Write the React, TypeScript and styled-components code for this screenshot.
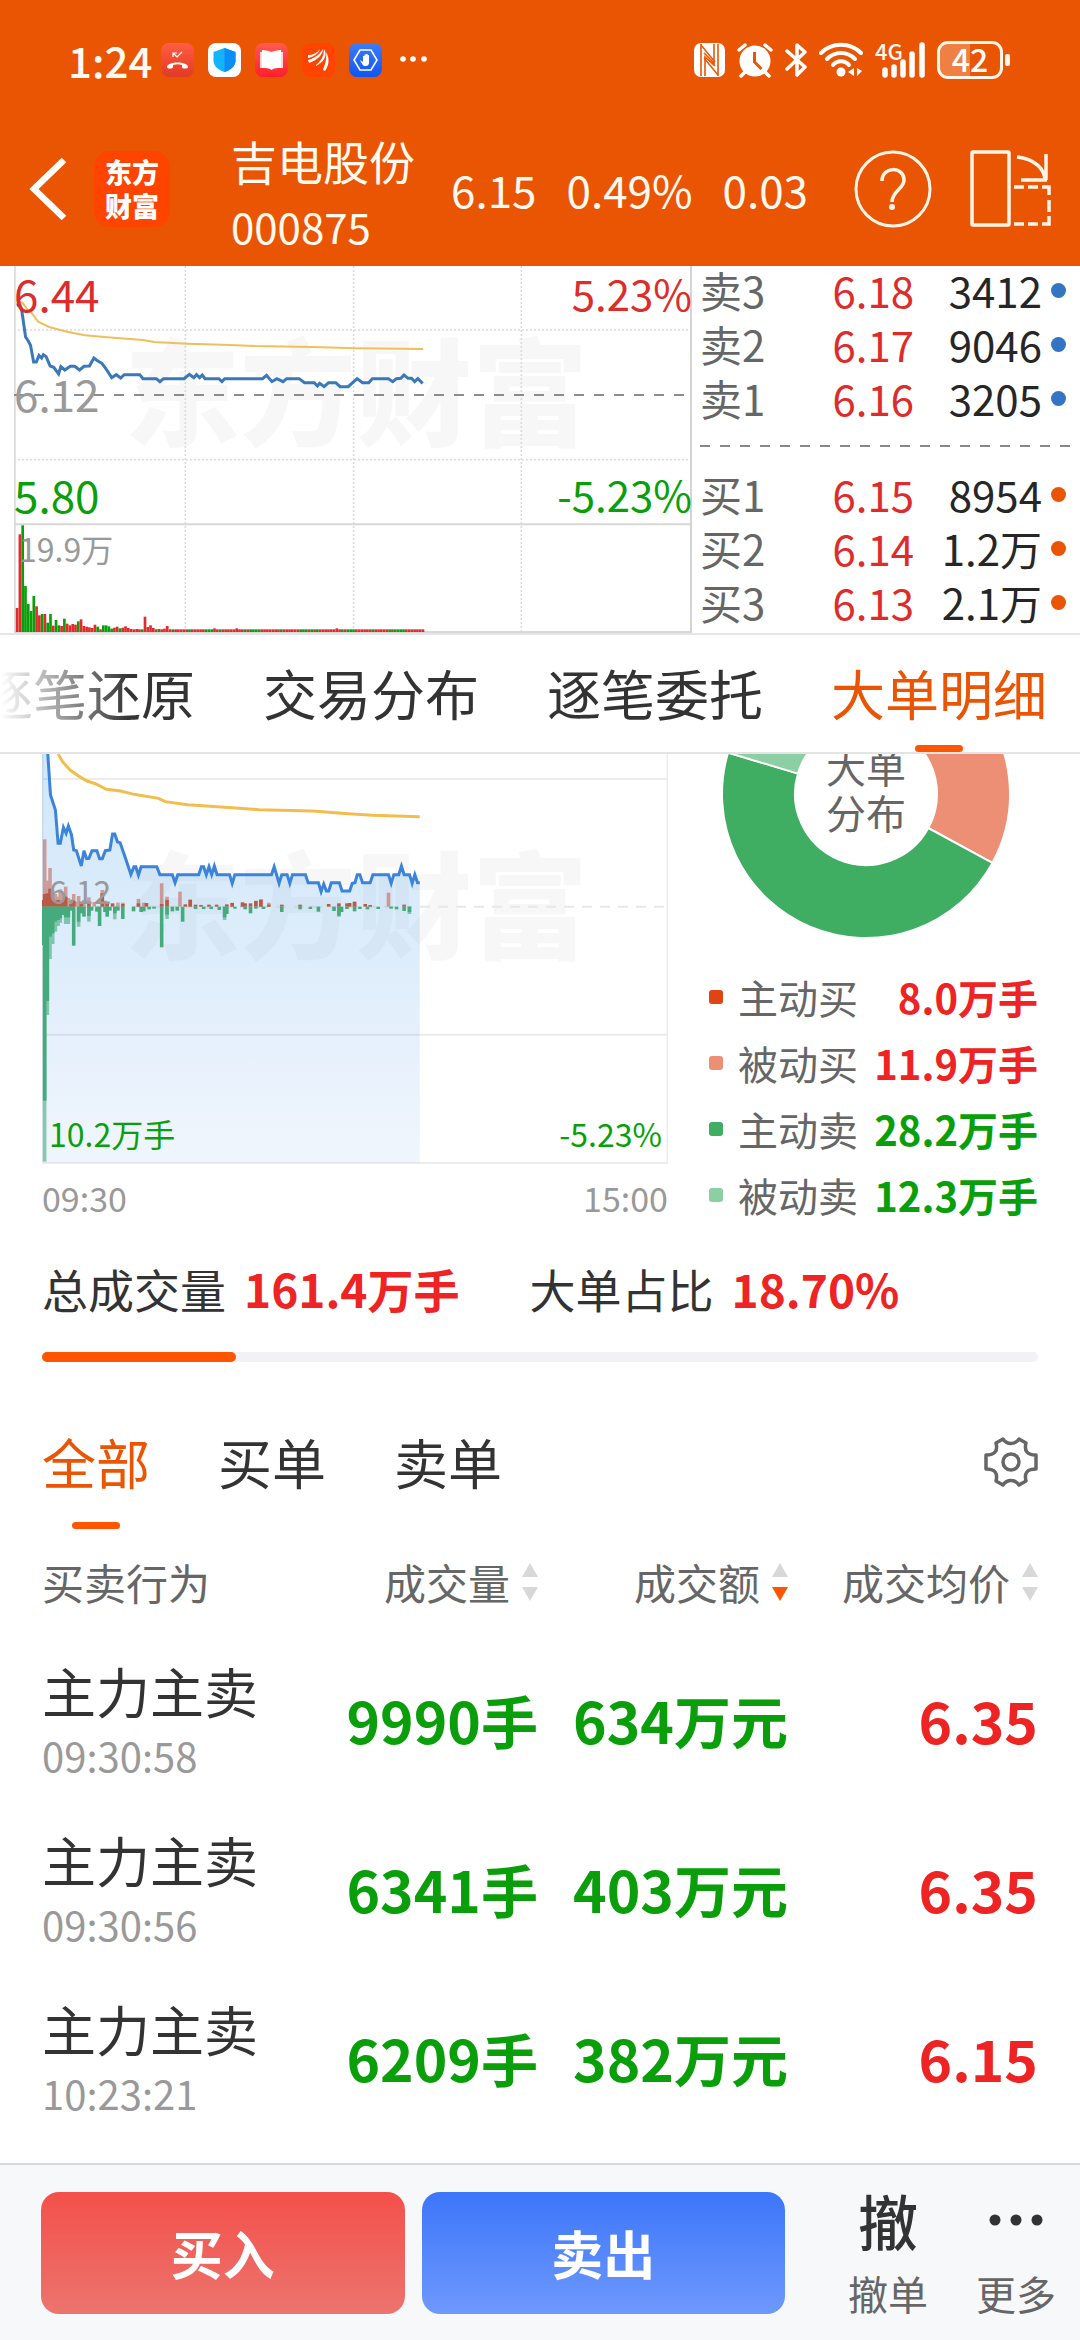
import React, { useState } from "react";
import styled, { createGlobalStyle } from "styled-components";

const color = {
  brand: "#ea5504",
  accent: "#ff5500",
  red: "#ee2424",
  priceRed: "#dd2c2c",
  green: "#0a9f0a",
  ink: "#333333",
  sub: "#666666",
  mute: "#999999",
  line: "#dddddd",
};

const GlobalStyle = createGlobalStyle`
  * { box-sizing: border-box; }
  body {
    margin: 0;
    background: #ffffff;
    color: ${color.ink};
    font-family: "Noto Sans CJK SC", "Noto Sans", sans-serif;
  }
  button {
    margin: 0;
    padding: 0;
    border: 0;
    background: none;
    color: inherit;
    font: inherit;
    cursor: pointer;
  }
`;

const Page = styled.div`
  display: flex;
  flex-direction: column;
  min-height: 100vh;
  overflow: hidden;
`;

/* ---------- header ---------- */

const Header = styled.header`
  background: ${color.brand};
  color: #fffaf0;
`;

const StatusBar = styled.div`
  display: flex;
  justify-content: space-between;
  align-items: center;
  height: 120px;
  padding: 0 70px 0 68px;
`;

const StatusGroup = styled.div<{ $gap: number }>`
  display: flex;
  align-items: center;
  gap: ${(p) => p.$gap}px;
`;

const Clock = styled.time`
  font-size: 42px;
  font-weight: 500;
  line-height: 60px;
`;

const Battery = styled.div`
  display: flex;
  align-items: center;
  gap: 2px;
`;

const BatteryBody = styled.div`
  width: 66px;
  height: 38px;
  border: 3px solid #fff5e8;
  border-radius: 11px;
  background: linear-gradient(90deg, #ee8044 50%, transparent 50%);
  color: #ffffff;
  font-size: 32px;
  font-weight: 500;
  line-height: 28px;
  text-align: center;
`;

const BatteryNub = styled.div`
  width: 5px;
  height: 12px;
  border-radius: 2px;
  background: #fff5e8;
`;

const NavBar = styled.div`
  display: flex;
  align-items: center;
  height: 146px;
  padding: 0 28px 8px 28px;
`;

const IconButton = styled.button`
  display: flex;
  flex: none;
`;

const Logo = styled.a`
  display: flex;
  flex: none;
  align-items: center;
  justify-content: center;
  width: 76px;
  height: 76px;
  margin-left: 26px;
  border-radius: 16px;
  background: #ff4400;
  color: #ffffff;
  font-size: 27px;
  font-weight: 900;
  line-height: 34px;
  text-align: center;
  text-decoration: none;
`;

const StockId = styled.div`
  flex: none;
  width: 220px;
  margin-left: 61px;
  padding-top: 8px;
`;

const StockName = styled.h1`
  margin: 0;
  font-size: 46px;
  font-weight: 400;
  line-height: 66px;
`;

const StockCode = styled.div`
  font-size: 42px;
  line-height: 66px;
`;

const Quote = styled.div`
  display: flex;
  flex: 1;
  gap: 30px;
  font-size: 44px;
  line-height: 60px;
`;

const NavActions = styled.div`
  display: flex;
  flex: none;
  align-items: center;
  gap: 38px;
`;

/* ---------- quote panel ---------- */

const QuotePanel = styled.section`
  display: grid;
  grid-template-columns: 692fr 388fr;
  height: 369px;
  border-bottom: 2px solid #e6e6e6;
`;

const MiniChart = styled.div`
  position: relative;
  margin-left: 14px;
  border-right: 2px solid #d4d4d4;
  height: 367px;
`;

const ChartSvg = styled.svg`
  display: block;
  position: relative;
  width: 100%;
  height: 100%;
`;

const ChartLabel = styled.span<{
  $top: number;
  $left?: number;
  $right?: number;
  $size: number;
  $color: string;
}>`
  position: absolute;
  top: ${(p) => p.$top}px;
  ${(p) => (p.$left !== undefined ? `left: ${p.$left}px;` : "")}
  ${(p) => (p.$right !== undefined ? `right: ${p.$right}px;` : "")}
  color: ${(p) => p.$color};
  font-size: ${(p) => p.$size}px;
  line-height: 48px;
  white-space: nowrap;
`;

const Watermark = styled.span<{ $top: number; $left: number }>`
  position: absolute;
  top: ${(p) => p.$top}px;
  left: ${(p) => p.$left}px;
  color: rgba(0, 0, 0, 0.03);
  font-size: 116px;
  font-weight: 900;
  line-height: 120px;
  white-space: nowrap;
`;

const OrderBook = styled.div`
  padding: 0 14px 0 8px;
`;

const OrderRow = styled.div`
  display: grid;
  grid-template-columns: 1fr 84px 128px 24px;
  align-items: start;
  height: 54px;
  font-size: 42px;
  line-height: 48px;
  text-align: right;
`;

const OrderLabel = styled.span`
  color: ${color.sub};
  text-align: left;
`;

const OrderPrice = styled.span`
  color: ${color.priceRed};
`;

const OrderVolume = styled.span`
  color: #262626;
`;

const Dot = styled.i<{ $color: string }>`
  justify-self: end;
  width: 15px;
  height: 15px;
  margin-top: 17px;
  border-radius: 50%;
  background: ${(p) => p.$color};
`;

const OrderDivider = styled.div`
  height: 2px;
  margin: 17px -10px 23px 0;
  background: repeating-linear-gradient(90deg, #888 0 10px, transparent 10px 20px);
`;

/* ---------- tabs ---------- */

const TabStrip = styled.nav`
  position: relative;
  display: flex;
  justify-content: flex-end;
  gap: 68px;
  height: 119px;
  padding-right: 33px;
  border-bottom: 2px solid #e4e4e4;
  overflow: hidden;
`;

const TabFade = styled.div`
  position: absolute;
  inset: 0 auto 0 0;
  width: 130px;
  background: linear-gradient(90deg, #ffffff, rgba(255, 255, 255, 0));
  pointer-events: none;
`;

const Tab = styled.button<{ $active: boolean }>`
  display: flex;
  flex: none;
  flex-direction: column;
  align-items: center;
  justify-content: space-between;
  height: 117px;
  padding-top: 8px;
  color: ${(p) => (p.$active ? color.brand : color.ink)};
  font-size: 54px;
  line-height: 100px;
  white-space: nowrap;

  &::after {
    content: "";
    width: 48px;
    height: 7px;
    border-radius: 4px;
    background: ${(p) => (p.$active ? color.accent : "transparent")};
  }
`;

const FilterTab = styled(Tab)`
  padding-top: 0;
`;

/* ---------- big-order section ---------- */

const Content = styled.main`
  flex: 1;
  padding: 0 42px;
`;

const Distribution = styled.section`
  display: grid;
  grid-template-columns: 626fr 370fr;
`;

const FlowChart = styled.div`
  position: relative;
  height: 410px;
`;

const TimeAxis = styled.div`
  display: flex;
  justify-content: space-between;
  padding-top: 10px;
  color: ${color.mute};
  font-size: 34px;
  line-height: 48px;
`;

const DonutBox = styled.div`
  position: relative;
  height: 184px;
  margin-left: 54px;
  width: 288px;
  overflow: hidden;
`;

const DonutTitle = styled.div`
  position: absolute;
  inset: -11px 0 auto 0;
  color: ${color.sub};
  font-size: 40px;
  line-height: 46px;
  text-align: center;
`;

const Legend = styled.ul`
  margin: 26px 0 0 41px;
  padding: 0;
  list-style: none;
`;

const LegendItem = styled.li`
  display: flex;
  align-items: center;
  height: 66px;
  font-size: 40px;
  line-height: 62px;
`;

const Swatch = styled.i<{ $color: string }>`
  width: 14px;
  height: 14px;
  margin-right: 15px;
  border-radius: 3px;
  background: ${(p) => p.$color};
`;

const LegendName = styled.span`
  flex: 1;
  color: ${color.sub};
`;

const LegendValue = styled.strong<{ $color: string }>`
  color: ${(p) => p.$color};
  font-weight: 700;
`;

const Stats = styled.div`
  display: flex;
  gap: 70px;
  margin-top: 28px;
  font-size: 46px;
  line-height: 64px;
`;

const Stat = styled.div`
  display: flex;
  gap: 18px;
`;

const StatValue = styled.strong`
  color: ${color.red};
  font-weight: 700;
`;

const Track = styled.div`
  height: 10px;
  margin-top: 32px;
  border-radius: 5px;
  background: #f2f2f5;
`;

const Fill = styled.div<{ $percent: number }>`
  width: ${(p) => p.$percent}%;
  height: 100%;
  border-radius: 5px;
  background: ${color.accent};
`;

const FilterBar = styled.div`
  display: flex;
  align-items: center;
  gap: 68px;
  height: 117px;
  margin-top: 50px;
`;

const FilterTools = styled.div`
  flex: 1;
  display: flex;
  justify-content: flex-end;
  align-items: center;
  padding-bottom: 17px;
`;

const Trades = styled.table`
  width: 100%;
  table-layout: fixed;
  border-collapse: collapse;
  text-align: right;

  th,
  td {
    padding: 0;
  }
  th:first-child,
  td:first-child {
    width: 246px;
    text-align: left;
  }
  th:last-child,
  td:last-child,
  th:nth-child(2),
  td:nth-child(2),
  th:nth-child(3),
  td:nth-child(3) {
    width: 250px;
  }
`;

const HeadCell = styled.th`
  height: 105px;
  color: ${color.sub};
  font-size: 42px;
  font-weight: 400;
  line-height: 60px;
`;

const SortButton = styled.button`
  display: inline-flex;
  align-items: center;
  gap: 12px;
  white-space: nowrap;
`;

const TradeRow = styled.tr`
  height: 169px;
`;

const TradeName = styled.div`
  font-size: 54px;
  line-height: 72px;
`;

const TradeTime = styled.time`
  display: block;
  color: ${color.mute};
  font-size: 40px;
  line-height: 56px;
`;

const TradeValue = styled.td<{ $color: string }>`
  color: ${(p) => p.$color};
  font-size: 57px;
  font-weight: 700;
  line-height: 72px;
  white-space: nowrap;
`;

/* ---------- bottom bar ---------- */

const BottomBar = styled.footer`
  display: flex;
  align-items: center;
  height: 177px;
  padding: 0 22px 0 41px;
  border-top: 2px solid #d5d9db;
  background: #f6f8fa;
`;

const TradeButton = styled.button<{ $from: string; $to: string }>`
  flex: 1;
  height: 122px;
  margin-right: 17px;
  border-radius: 18px;
  background: linear-gradient(180deg, ${(p) => p.$from}, ${(p) => p.$to});
  color: #ffffff;
  font-size: 52px;
  font-weight: 700;
  line-height: 72px;
`;

const MiniAction = styled.button`
  display: flex;
  flex: none;
  flex-direction: column;
  align-items: center;
  width: 84px;
  margin-left: 44px;
  color: ${color.sub};
  font-size: 40px;
  line-height: 56px;
`;

const MiniActions = styled.div`
  display: flex;
  flex: none;
  padding-bottom: 10px;
`;

const MiniIcon = styled.span`
  display: flex;
  align-items: center;
  height: 90px;
  color: ${color.ink};
  font-size: 60px;
  font-weight: 500;
  line-height: 90px;
`;

/* ---------- icons ---------- */

const AppBadges = () => (
  <svg width="268" height="34" viewBox="0 0 268 34" aria-hidden="true">
    <defs>
      <linearGradient id="callBg" x2="0" y2="1">
        <stop stopColor="#ff5d43" />
        <stop offset="1" stopColor="#e23a24" />
      </linearGradient>
      <linearGradient id="bookBg" x2="0" y2="1">
        <stop stopColor="#ff5a52" />
        <stop offset="1" stopColor="#ff1f2c" />
      </linearGradient>
      <linearGradient id="handBg" x2="0" y2="1">
        <stop stopColor="#3f7cf7" />
        <stop offset="1" stopColor="#0f55f2" />
      </linearGradient>
    </defs>
    <rect width="33" height="34" rx="8" fill="url(#callBg)" />
    <path d="M12 14v-4h4M12 10l4 4 5-5" fill="none" stroke="#fff" strokeWidth="1.200" />
    <path d="M6 24c0-6 21-6 21 0 0 2-6 2-6 0v-2c-3-1-6-1-9 0v2c0 2-6 2-6 0z" fill="#fff" />
    <rect x="47" width="33" height="34" rx="8" fill="#fff" />
    <path d="M63.500 5l11 4v9c0 5-5 9-11 11-6-2-11-6-11-11V9z" fill="#12b4fb" />
    <path d="M63.500 5l11 4v9c0 5-5 9-11 11z" fill="#0a8df5" />
    <rect x="94" width="33" height="34" rx="8" fill="url(#bookBg)" />
    <path d="M99 9h23v16H99z" fill="#fff" opacity=".8" />
    <path d="M101 7c4 0 7 1 9.500 2 2.500-1 5.500-2 9.500-2v18c-4 0-7 0-9.500 2-2.500-2-5.500-2-9.500-2z" fill="#fff" />
    <rect x="141" width="33" height="34" rx="8" fill="#ff4400" />
    <path d="M147 12c5 0 9-2 12-6-1 4-6 8-12 9zM147 17c7-2 12-6 15-11 0 6-6 11-14 14zM155 22c5-4 8-9 8-16 4 6 0 13-8 17zM162 27c2-6 4-10 3-18 4 7 3 13-1 19z" fill="#fff" />
    <rect x="188" width="33" height="34" rx="8" fill="url(#handBg)" />
    <path d="M193 17l6-10h11l6 10-6 10h-11z" fill="none" stroke="#fff" strokeWidth="1.600" />
    <path d="M199 17l3 2v-6h1.500v-1.500h1.500V11h1.500v1h1.500v7c0 3-1 4-4 4-2 0-3-2-5-6z" fill="#fff" />
    <circle cx="242" cy="16" r="2.800" fill="#fff" />
    <circle cx="252" cy="16" r="2.800" fill="#fff" />
    <circle cx="263" cy="16" r="2.800" fill="#fff" />
  </svg>
);

const NfcIcon = () => (
  <svg width="31" height="34" viewBox="0 0 31 34" aria-hidden="true">
    <rect width="31" height="34" rx="7" fill="#fff" />
    <path d="M7 1v32M24 1v32" stroke={color.brand} strokeWidth="1.600" />
    <path d="M11 33V14l10 9M20 1v19l-10-10" fill="none" stroke={color.brand} strokeWidth="1.600" />
    <path d="M7 2l14 17M10 15l14 17" stroke={color.brand} strokeWidth="1.400" />
  </svg>
);

const AlarmIcon = () => (
  <svg width="36" height="36" viewBox="0 0 36 36" aria-hidden="true">
    <circle cx="18" cy="19" r="15.500" fill="#fff" />
    <path d="M2 8l6-5M34 8l-6-5M4 34l5-5M32 34l-5-5" stroke="#fff" strokeWidth="3.500" strokeLinecap="round" />
    <path d="M17.500 10v10l7 7" fill="none" stroke={color.brand} strokeWidth="3" />
  </svg>
);

const BluetoothIcon = () => (
  <svg width="22" height="36" viewBox="0 0 22 36" aria-hidden="true">
    <path d="M2 9l18 16-8 8V3l8 7L2 27" fill="none" stroke="#fff" strokeWidth="3.500" strokeLinejoin="round" strokeLinecap="round" />
  </svg>
);

const WifiIcon = () => (
  <svg width="44" height="36" viewBox="0 0 44 36" aria-hidden="true">
    <g fill="none" stroke="#fff" strokeWidth="4" strokeLinecap="round">
      <path d="M2 11c11-11 29-11 40 0" />
      <path d="M8 17c8-8 20-8 28 0" />
      <path d="M14 23c4-5 12-5 16 0" />
    </g>
    <circle cx="22" cy="30" r="4.500" fill="#fff" />
    <path d="M35 26v8l-6-4zM38 26v8l5-5z" fill="#fff" />
  </svg>
);

const SignalWrap = styled.div`
  position: relative;
  display: flex;
`;

const SignalTag = styled.span`
  position: absolute;
  top: -3px;
  left: 0;
  font-size: 22px;
  font-weight: 500;
  line-height: 22px;
`;

const Signal = () => (
  <SignalWrap>
    <SignalTag>4G</SignalTag>
    <svg width="50" height="36" viewBox="0 0 50 36" aria-hidden="true">
      <path d="M10 28v5M19 25v8M28 20v13M37 12v21M47 3v30" stroke="#fff" strokeWidth="5.500" strokeLinecap="round" />
    </svg>
  </SignalWrap>
);

const BackIcon = () => (
  <svg width="40" height="66" viewBox="0 0 40 66" aria-hidden="true">
    <path d="M36 4L6 33l30 29" fill="none" stroke="#fff" strokeWidth="6.500" />
  </svg>
);

const HelpIcon = () => (
  <svg width="78" height="78" viewBox="0 0 78 78" fill="none" stroke="#fff5e6" aria-hidden="true">
    <circle cx="39" cy="39" r="37" strokeWidth="3" />
    <path d="M28 31c0-15 22-15 22-1 0 9-12 11-12 22" strokeWidth="3.500" />
    <circle cx="38" cy="57" r="3" fill="#fff5e6" stroke="none" />
  </svg>
);

const RotateIcon = () => (
  <svg width="82" height="78" viewBox="0 0 82 78" fill="none" stroke="#fff5e6" strokeWidth="3.500" aria-hidden="true">
    <rect x="2" y="2" width="37" height="73" rx="1" />
    <path d="M47 7c17 2 28 11 28 24M76 4v26M51 30h26" />
    <path d="M44 37h10M58 37h10M72 37h7v8M79 50v12M79 66v8h-7M68 74H58M54 74H44" />
  </svg>
);

const GearIcon = () => (
  <svg width="54" height="50" viewBox="0 0 54 50" fill="none" stroke="#666" strokeWidth="3.500" aria-hidden="true">
    <path
      d="M12 6L19 2C23 8 31 8 35 2L42 6C40 14 43 18 52 18V32C43 32 40 36 42 44L35 48C31 42 23 42 19 48L12 44C14 36 11 32 2 32V18C11 18 14 14 12 6Z"
      strokeLinejoin="round"
    />
    <circle cx="27" cy="25" r="8" />
  </svg>
);

const SortIcon = ({ active }: { active: boolean }) => (
  <svg width="16" height="38" viewBox="0 0 16 38" aria-hidden="true">
    <path d="M8 0l8 14H0z" fill="#d8d8d8" />
    <path d="M8 38l8-14H0z" fill={active ? color.accent : "#d8d8d8"} />
  </svg>
);

const DotsIcon = () => (
  <svg width="54" height="12" viewBox="0 0 54 12" fill="#333" aria-hidden="true">
    <circle cx="6" cy="6" r="5.500" />
    <circle cx="27" cy="6" r="5.500" />
    <circle cx="48" cy="6" r="5.500" />
  </svg>
);

/* ---------- chart data ---------- */

const priceLine =
  "37,138 44,136 48,150 57,233 63,245 68,258 75,308 81,308 87,288 93,296 97,286 103,292 112,320 120,324 131,344 136,322 145,332 157,321 167,321 178,332 188,321 200,320 210,296 218,304 228,312 236,326 250,355 260,346 270,356 278,346 313,346 320,358 350,358 358,367 366,358 412,358 424,345 434,355 440,346 447,355 453,347 459,358 490,358 497,367 503,358 588,358 597,348 609,367 620,358 634,367 642,358 670,358 682,370 704,370 711,380 716,372 726,382 736,370 752,370 762,382 780,382 800,358 812,370 826,370 834,358 870,358 880,367 888,358 898,357 905,347 914,357 922,357 929,367 936,358 947,372";
const averageLine =
  "37,124 50,130 62,152 70,160 85,187 110,203 150,217 190,228 240,234 320,242 345,248 420,253 500,256 570,260 700,263 800,267 948,269";

const flowPrice =
  "107,42 113,165 124,210 130,310 135,310 142,262 148,280 153,258 160,284 165,330 171,332 182,378 188,332 194,356 199,355 206,332 217,332 223,356 229,356 236,332 246,330 252,282 257,282 263,306 269,308 281,355 293,403 300,380 304,380 310,405 316,380 351,380 358,404 386,404 392,428 398,404 445,404 451,380 456,380 462,404 468,380 474,404 480,378 486,404 514,404 520,430 526,404 608,404 614,380 625,430 631,404 643,404 649,430 655,404 684,404 690,428 713,428 719,455 725,432 731,453 736,453 742,428 760,428 766,453 783,453 789,430 795,428 800,404 806,404 812,428 829,428 835,404 870,404 876,430 882,404 893,404 899,378 905,404 917,404 923,430 929,404 935,428 940,428";
const flowAverage =
  "130,42 140,65 157,90 178,110 195,123 215,132 238,148 270,153 300,163 355,175 370,185 420,194 520,203 580,209 700,213 780,221 835,226 940,230";

const openingVolumes: [number, "r" | "g"][] = [
  [72, "r"], [293, "r"], [320, "g"], [138, "g"], [84, "g"], [63, "g"], [108, "g"], [77, "r"], [50, "r"],
  [54, "g"], [54, "r"], [28, "g"], [54, "g"], [19, "r"], [36, "g"], [20, "g"], [18, "r"], [40, "g"],
  [25, "r"], [20, "r"], [24, "r"], [22, "r"], [32, "g"], [38, "r"], [18, "r"], [16, "r"], [14, "r"],
  [12, "r"], [22, "r"], [16, "g"], [8, "r"], [20, "g"], [20, "g"], [17, "g"], [10, "g"], [13, "r"],
  [16, "r"], [11, "g"], [13, "r"], [17, "r"], [12, "r"], [9, "r"], [8, "r"], [9, "r"], [8, "r"],
  [8, "g"], [46, "r"], [15, "r"], [20, "r"], [12, "r"], [8, "r"], [9, "g"], [8, "r"], [10, "r"], [18, "r"],
];
const volumes = Array.from({ length: 147 }, (_, i) => {
  const known = openingVolumes[i];
  if (known) return known;
  const tone = i % 11 === 7 || i % 13 === 4 || i % 17 < 3 ? "g" : "r";
  return [i === 71 || i === 79 || i === 115 ? 11 : 8, tone] as [number, "r" | "g"];
});

type Bar = [number, number];
const buyPale: Bar[] = [
  [100, 298], [106, 422], [112, 384], [118, 450], [124, 462], [130, 470], [135, 448], [141, 462], [147, 440],
  [153, 474], [159, 486], [165, 462], [171, 485], [176, 468], [188, 480], [199, 472], [211, 486], [229, 450],
  [235, 482], [264, 488], [275, 488], [310, 477], [322, 488], [362, 430], [374, 470], [403, 455], [426, 478],
  [520, 488], [573, 482], [585, 478], [602, 488], [794, 484], [870, 458],
];
const buyDeep: Bar[] = [
  [97, 480], [100, 462], [106, 460], [112, 446], [118, 482], [124, 484], [130, 480], [135, 484], [141, 486],
  [147, 470], [159, 492], [165, 482], [182, 492], [199, 490], [229, 460], [240, 492], [252, 490], [275, 492],
  [310, 490], [328, 489], [362, 492], [374, 480], [415, 493], [426, 480], [438, 494], [450, 495], [468, 494],
  [485, 494], [508, 493], [520, 489], [543, 487], [549, 490], [561, 490], [573, 483], [584, 479], [602, 494],
  [631, 494], [672, 494], [736, 492], [759, 490], [777, 490], [783, 489], [794, 486], [818, 492], [829, 495],
  [905, 494],
];
const sellPale: Bar[] = [
  [100, 1265], [106, 825], [112, 657], [118, 612], [124, 575], [130, 558], [135, 548], [147, 552], [153, 552],
  [176, 560], [199, 545], [257, 538], [374, 537], [503, 540], [759, 530], [917, 522],
];
const sellDeep: Bar[] = [
  [97, 615], [100, 1082], [106, 783], [112, 590], [118, 580], [124, 545], [130, 540], [135, 535], [141, 525],
  [147, 532], [153, 532], [159, 512], [165, 617], [176, 545], [182, 520], [188, 530], [199, 528], [205, 512],
  [217, 515], [223, 558], [235, 516], [240, 530], [246, 512], [257, 520], [264, 512], [275, 537], [299, 514],
  [316, 516], [322, 514], [334, 508], [345, 506], [362, 622], [374, 524], [386, 514], [397, 512], [409, 545],
  [438, 507], [456, 507], [473, 507], [491, 510], [503, 532], [508, 522], [526, 506], [549, 508], [561, 520],
  [573, 506], [590, 507], [631, 516], [672, 508], [695, 507], [713, 515], [748, 513], [759, 527], [765, 516],
  [777, 507], [794, 514], [806, 507], [823, 508], [847, 507], [876, 506], [888, 508], [905, 513], [917, 516],
];

const Bars = ({ bars, fill, opacity = 1 }: { bars: Bar[]; fill: string; opacity?: number }) => (
  <g fill={fill} opacity={opacity}>
    {bars.map(([x, y]) => (
      <rect key={x} x={x - 4} y={Math.min(y, 500)} width="8" height={Math.abs(y - 500)} />
    ))}
  </g>
);

const slices = [
  { name: "主动买", value: 8.0, fill: "#e04415", text: color.red },
  { name: "被动买", value: 11.9, fill: "#ed8f74", text: color.red },
  { name: "主动卖", value: 28.2, fill: "#3fae63", text: color.green },
  { name: "被动卖", value: 12.3, fill: "#8ccfa3", text: color.green },
];

const Donut = () => {
  const total = slices.reduce((sum, s) => sum + s.value, 0);
  const c = 144;
  let angle = -Math.PI / 2;
  const at = (r: number, a: number) => `${c + r * Math.cos(a)} ${c + r * Math.sin(a)}`;
  return (
    <svg width="288" height="184" viewBox="0 104 288 184" role="img" aria-label="大单分布">
      {slices.map((s) => {
        const start = angle;
        angle += (s.value / total) * Math.PI * 2;
        const large = angle - start > Math.PI ? 1 : 0;
        return (
          <path
            key={s.name}
            d={`M${at(144, start)}A144 144 0 ${large} 1 ${at(144, angle)}L${at(71, angle)}A71 71 0 ${large} 0 ${at(71, start)}Z`}
            fill={s.fill}
            stroke="#fff"
            strokeWidth="2"
          />
        );
      })}
    </svg>
  );
};

/* ---------- page data ---------- */

const asks = [
  ["卖3", "6.18", "3412"],
  ["卖2", "6.17", "9046"],
  ["卖1", "6.16", "3205"],
];
const bids = [
  ["买1", "6.15", "8954"],
  ["买2", "6.14", "1.2万"],
  ["买3", "6.13", "2.1万"],
];
const sections = ["逐笔还原", "交易分布", "逐笔委托", "大单明细"];
const filters = ["全部", "买单", "卖单"];
const sortable = ["成交量", "成交额", "成交均价"];
const trades = [
  { side: "主力主卖", time: "09:30:58", volume: "9990手", amount: "634万元", price: "6.35" },
  { side: "主力主卖", time: "09:30:56", volume: "6341手", amount: "403万元", price: "6.35" },
  { side: "主力主卖", time: "10:23:21", volume: "6209手", amount: "382万元", price: "6.15" },
];

const Orders = ({ rows, dot }: { rows: string[][]; dot: string }) => (
  <>
    {rows.map(([label, price, volume]) => (
      <OrderRow key={label}>
        <OrderLabel>{label}</OrderLabel>
        <OrderPrice>{price}</OrderPrice>
        <OrderVolume>{volume}</OrderVolume>
        <Dot $color={dot} />
      </OrderRow>
    ))}
  </>
);

export default function App() {
  const [section, setSection] = useState("大单明细");
  const [filter, setFilter] = useState("全部");
  const [sort, setSort] = useState("成交额");

  return (
    <Page>
      <GlobalStyle />
      <Header>
        <StatusBar>
          <StatusGroup $gap={9}>
            <Clock>1:24</Clock>
            <AppBadges />
          </StatusGroup>
          <StatusGroup $gap={12}>
            <NfcIcon />
            <AlarmIcon />
            <BluetoothIcon />
            <WifiIcon />
            <Signal />
            <Battery>
              <BatteryBody>42</BatteryBody>
              <BatteryNub />
            </Battery>
          </StatusGroup>
        </StatusBar>
        <NavBar>
          <IconButton aria-label="返回">
            <BackIcon />
          </IconButton>
          <Logo href="#home">
            东方
            <br />
            财富
          </Logo>
          <StockId>
            <StockName>吉电股份</StockName>
            <StockCode>000875</StockCode>
          </StockId>
          <Quote>
            <span>6.15</span>
            <span>0.49%</span>
            <span>0.03</span>
          </Quote>
          <NavActions>
            <IconButton aria-label="帮助">
              <HelpIcon />
            </IconButton>
            <IconButton aria-label="横屏">
              <RotateIcon />
            </IconButton>
          </NavActions>
        </NavBar>
      </Header>

      <QuotePanel>
        <MiniChart>
          <Watermark $top={60} $left={110}>东方财富</Watermark>
          <ChartSvg viewBox="31 20 1515 1101" preserveAspectRatio="none" aria-hidden="true">
            <g fill="none">
              <g stroke="#d9d9d9" strokeWidth="1.500" strokeDasharray="2 2">
                {[415, 792, 1168].map((x) => (
                  <path key={x} d={`M${x} 20V1121`} vectorEffect="non-scaling-stroke" />
                ))}
                {[212, 601].map((y) => (
                  <path key={y} d={`M31 ${y}H1546`} vectorEffect="non-scaling-stroke" />
                ))}
              </g>
              <path d="M33 20V1121" stroke="#dedede" strokeWidth="2" vectorEffect="non-scaling-stroke" />
              <path d="M31 795H1546M31 1118H1546" stroke="#d8d8d8" strokeWidth="2" vectorEffect="non-scaling-stroke" />
              <path d="M31 407H1546" stroke="#8c8c8c" strokeWidth="2" strokeDasharray="10 10" vectorEffect="non-scaling-stroke" />
              <polyline points={averageLine} stroke="#f0bf5c" strokeWidth="2" vectorEffect="non-scaling-stroke" />
              <polyline points={priceLine} stroke="#3a78b8" strokeWidth="3" vectorEffect="non-scaling-stroke" />
            </g>
            {volumes.map(([h, tone], i) => (
              <rect key={i} x={35 + i * 6.23} y={1118 - h} width="6" height={h} fill={tone === "r" ? "#e02c2c" : "#0a9f0a"} />
            ))}
          </ChartSvg>
          <ChartLabel $top={3} $left={0} $size={44} $color={color.priceRed}>6.44</ChartLabel>
          <ChartLabel $top={3} $right={-2} $size={42} $color={color.priceRed}>5.23%</ChartLabel>
          <ChartLabel $top={103} $left={0} $size={44} $color={color.mute}>6.12</ChartLabel>
          <ChartLabel $top={204} $left={0} $size={44} $color={color.green}>5.80</ChartLabel>
          <ChartLabel $top={204} $right={-2} $size={42} $color={color.green}>-5.23%</ChartLabel>
          <ChartLabel $top={258} $left={5} $size={32} $color={color.mute}>19.9万</ChartLabel>
        </MiniChart>
        <OrderBook>
          <Orders rows={asks} dot="#3375c4" />
          <OrderDivider />
          <Orders rows={bids} dot={color.brand} />
        </OrderBook>
      </QuotePanel>

      <TabStrip>
        {sections.map((name) => (
          <Tab key={name} $active={name === section} onClick={() => setSection(name)}>
            {name}
          </Tab>
        ))}
        <TabFade />
      </TabStrip>

      <Content>
        <Distribution>
          <div>
            <FlowChart>
              <Watermark $top={85} $left={82}>东方财富</Watermark>
              <ChartSvg viewBox="94 42 1402 1230" preserveAspectRatio="none" aria-hidden="true">
                <defs>
                  <linearGradient id="area" gradientUnits="userSpaceOnUse" x1="0" y1="42" x2="0" y2="1270">
                    <stop stopColor="#2b95ea" stopOpacity=".22" />
                    <stop offset=".5" stopColor="#3b96e8" stopOpacity=".17" />
                    <stop offset="1" stopColor="#4a8de8" stopOpacity=".08" />
                  </linearGradient>
                </defs>
                <path d="M94 117H1496M94 884H1496M94 1269H1496" stroke="#ececec" strokeWidth="2" vectorEffect="non-scaling-stroke" />
                <path d="M95 42V1272M1495 42V1272" stroke="#ececec" strokeWidth="2" vectorEffect="non-scaling-stroke" />
                <path d="M94 500H1496" stroke="#e8e8e8" strokeWidth="2" strokeDasharray="10 8" vectorEffect="non-scaling-stroke" />
                <polygon points={`94,1268 94,42 ${flowPrice} 940,1268`} fill="url(#area)" />
                <Bars bars={buyPale} fill="#c0503a" opacity={0.5} />
                <Bars bars={buyDeep} fill="#bb5a44" />
                <Bars bars={sellPale} fill="#45ab7c" opacity={0.6} />
                <Bars bars={sellDeep} fill="#45ab7c" />
                <polyline points={flowAverage} fill="none" stroke="#f3bd4d" strokeWidth="3" vectorEffect="non-scaling-stroke" />
                <polyline points={flowPrice} fill="none" stroke="#3b84da" strokeWidth="3" vectorEffect="non-scaling-stroke" />
              </ChartSvg>
              <ChartLabel $top={112} $left={7} $size={32} $color={color.mute}>6.12</ChartLabel>
              <ChartLabel $top={355} $left={7} $size={32} $color={color.green}>10.2万手</ChartLabel>
              <ChartLabel $top={355} $right={6} $size={32} $color={color.green}>-5.23%</ChartLabel>
            </FlowChart>
            <TimeAxis>
              <span>09:30</span>
              <span>15:00</span>
            </TimeAxis>
          </div>
          <div>
            <DonutBox>
              <Donut />
              <DonutTitle>
                大单
                <br />
                分布
              </DonutTitle>
            </DonutBox>
            <Legend>
              {slices.map((s) => (
                <LegendItem key={s.name}>
                  <Swatch $color={s.fill} />
                  <LegendName>{s.name}</LegendName>
                  <LegendValue $color={s.text}>{s.value.toFixed(1)}万手</LegendValue>
                </LegendItem>
              ))}
            </Legend>
          </div>
        </Distribution>

        <Stats>
          <Stat>
            <span>总成交量</span>
            <StatValue>161.4万手</StatValue>
          </Stat>
          <Stat>
            <span>大单占比</span>
            <StatValue>18.70%</StatValue>
          </Stat>
        </Stats>
        <Track>
          <Fill $percent={19.5} />
        </Track>

        <FilterBar>
          {filters.map((name) => (
            <FilterTab key={name} $active={name === filter} onClick={() => setFilter(name)}>
              {name}
            </FilterTab>
          ))}
          <FilterTools>
            <IconButton aria-label="设置">
              <GearIcon />
            </IconButton>
          </FilterTools>
        </FilterBar>

        <Trades>
          <thead>
            <tr>
              <HeadCell scope="col">买卖行为</HeadCell>
              {sortable.map((name) => (
                <HeadCell key={name} scope="col">
                  <SortButton onClick={() => setSort(name)}>
                    {name}
                    <SortIcon active={name === sort} />
                  </SortButton>
                </HeadCell>
              ))}
            </tr>
          </thead>
          <tbody>
            {trades.map((t) => (
              <TradeRow key={t.time}>
                <td>
                  <TradeName>{t.side}</TradeName>
                  <TradeTime>{t.time}</TradeTime>
                </td>
                <TradeValue $color={color.green}>{t.volume}</TradeValue>
                <TradeValue $color={color.green}>{t.amount}</TradeValue>
                <TradeValue $color={color.red}>{t.price}</TradeValue>
              </TradeRow>
            ))}
          </tbody>
        </Trades>
      </Content>

      <BottomBar>
        <TradeButton $from="#f4504a" $to="#ec746e">买入</TradeButton>
        <TradeButton $from="#3c76fa" $to="#6e98fd">卖出</TradeButton>
        <MiniActions>
          <MiniAction>
            <MiniIcon>撤</MiniIcon>
            撤单
          </MiniAction>
          <MiniAction>
            <MiniIcon>
              <DotsIcon />
            </MiniIcon>
            更多
          </MiniAction>
        </MiniActions>
      </BottomBar>
    </Page>
  );
}
